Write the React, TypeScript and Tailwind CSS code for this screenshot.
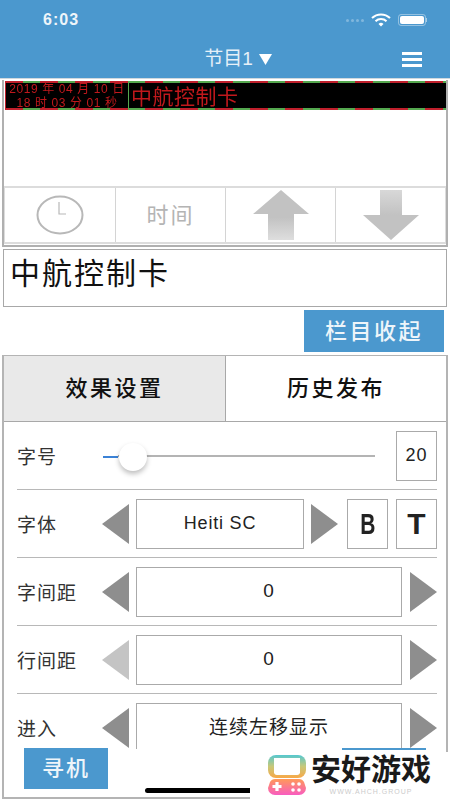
const FONT = "font-['Liberation_Sans','Noto_Sans_CJK_SC',sans-serif]";

function TriLeft({ light = false }: { light?: boolean }) {
  return (
    <svg width="27" height="40" viewBox="0 0 27 40" className="shrink-0">
      <polygon points="0,20 27,0 27,40" fill={light ? "#c4c4c4" : "#8e8e8e"} />
    </svg>
  );
}

function TriRight() {
  return (
    <svg width="27" height="40" viewBox="0 0 27 40" className="shrink-0">
      <polygon points="27,20 0,0 0,40" fill="#8e8e8e" />
    </svg>
  );
}

function ValueBox({ children, className }: { children: React.ReactNode; className: string }) {
  return (
    <div className={`flex h-[50px] items-center justify-center border-[1.5px] border-[#aaaaaa] text-[#222] ${className}`}>
      {children}
    </div>
  );
}

function Row({ label, children, last = false }: { label: string; children: React.ReactNode; last?: boolean }) {
  return (
    <div className={`flex h-[68px] items-center ${last ? "" : "border-b border-[#b8b8b8]"}`}>
      <div className="w-[85px] shrink-0 pt-[5px] text-[19px] tracking-[1px] text-[#333]">{label}</div>
      {children}
    </div>
  );
}

function StepRow({ label, value, light = false, last = false }: { label: string; value: string; light?: boolean; last?: boolean }) {
  return (
    <Row label={label} last={last}>
      <TriLeft light={light} />
      <ValueBox className="ml-[7px] w-[267px] text-[19px] tracking-[1px]">{value}</ValueBox>
      <div className="ml-[8px]">
        <TriRight />
      </div>
    </Row>
  );
}

export default function App() {
  return (
    <div className={`relative h-[800px] w-[450px] overflow-hidden bg-white ${FONT}`}>
      {/* header */}
      <header className="h-[79px] border-b border-[#cfd8de] bg-[#4b98ce] text-white">
        <div className="flex h-[40px] items-center justify-between pl-[43px] pr-[23px]">
          <span className="text-[16px] font-bold tracking-[1px] text-[#eef5fa]">6:03</span>
          <div className="flex items-center gap-[7px]">
            <div className="flex gap-[2px]">
              {[0, 1, 2, 3].map((i) => (
                <span key={i} className="h-[3px] w-[3px] rounded-full bg-white/30" />
              ))}
            </div>
            <svg width="20" height="14" viewBox="0 0 20 14">
              <path d="M1 5a13 13 0 0 1 18 0" fill="none" stroke="white" strokeWidth="2" />
              <path d="M4.5 8.3a8 8 0 0 1 11 0" fill="none" stroke="white" strokeWidth="2" />
              <path d="M7.5 11a3.5 3.5 0 0 1 5 0L10 13.6z" fill="white" />
            </svg>
            <div className="flex items-center">
              <div className="rounded-[3px] border border-white/40 p-[1px]">
                <div className="h-[8px] w-[24px] rounded-[2px] bg-white" />
              </div>
              <div className="h-[4px] w-[1px] bg-white/50" />
            </div>
          </div>
        </div>
        <div className="relative flex h-[38px] items-center justify-center pl-[26px]">
          <span className="text-[19px] text-[#e6f0f8]">节目1</span>
          <svg width="13" height="11" viewBox="0 0 13 11" className="ml-[6px]">
            <polygon points="0,0 13,0 6.5,11" fill="white" />
          </svg>
          <div className="absolute right-[28px] top-[12px] flex w-[20px] flex-col gap-[3px]">
            <span className="h-[3px] bg-white" />
            <span className="h-[3px] bg-white" />
            <span className="h-[3px] bg-white" />
          </div>
        </div>
      </header>

      {/* preview */}
      <section className="mx-[2px] mt-[1px] h-[167px] border-x-2 border-b-2 border-t-0 border-[#b0b0b0] bg-white pt-[1px]">
        <div className="ml-[1px] bg-[repeating-linear-gradient(90deg,#c0202c_0_18px,#55a84f_18px_35px)] py-[2px] pl-[1px]">
          <div className="flex h-[25px] bg-black text-[#c0181c]">
            <div className="flex w-[123px] shrink-0 flex-col items-center justify-center border-r border-[#55a84f] text-[12px] leading-[14px] tracking-[0.6px] blur-[0.3px]">
              <span>2019 年 04 月 10 日</span>
              <span>18 时 03 分 01 秒</span>
            </div>
            <div className="pl-[2px] text-[21px] leading-[27px] tracking-[0.5px] blur-[0.3px]">中航控制卡</div>
          </div>
        </div>
        <div className="mt-[76px] flex h-[58px] border-x border-y-2 border-[#dcdcdc] bg-white">
          <div className="flex w-[111px] items-center justify-center border-r border-[#d4d4d4]">
            <svg width="48" height="40" viewBox="0 0 48 40">
              <ellipse cx="24" cy="20" rx="22.5" ry="18.5" fill="none" stroke="#b8b8b8" strokeWidth="2" />
              <path d="M23 7v12h7" fill="none" stroke="#b8b8b8" strokeWidth="1.2" />
            </svg>
          </div>
          <div className="flex w-[110px] items-center justify-center border-r border-[#d4d4d4] text-[22px] tracking-[2px] text-[#b4b4b4]">
            时间
          </div>
          <div className="flex w-[110px] items-center justify-center border-r border-[#d4d4d4]">
            <svg width="56" height="50" viewBox="0 0 56 50">
              <defs>
                <linearGradient id="upFill" x1="0" y1="0" x2="0" y2="1">
                  <stop offset="0.55" stopColor="#c2c2c2" />
                  <stop offset="1" stopColor="#dedede" />
                </linearGradient>
              </defs>
              <polygon points="28,0 56,24 41,24 41,50 15,50 15,24 0,24" fill="url(#upFill)" />
            </svg>
          </div>
          <div className="flex flex-1 items-center justify-center">
            <svg width="56" height="50" viewBox="0 0 56 50">
              <defs>
                <linearGradient id="downFill" x1="0" y1="0" x2="0" y2="1">
                  <stop offset="0" stopColor="#d8d8d8" />
                  <stop offset="0.5" stopColor="#c2c2c2" />
                </linearGradient>
              </defs>
              <polygon points="28,50 56,25 39,25 39,0 17,0 17,25 0,25" fill="url(#downFill)" />
            </svg>
          </div>
        </div>
      </section>

      {/* text input */}
      <div className="mx-[3px] mt-[2px] h-[58px] border-[1.5px] border-[#a8a8a8] pl-[6px] text-[30px] leading-[48px] tracking-[2px] text-[#111]">
        中航控制卡
      </div>

      <div className="mt-[3px] flex justify-end pr-[6px]">
        <button className="h-[42px] w-[140px] bg-[#4b98ce] text-[22px] font-medium tracking-[2.5px] text-[#eef5fa]">栏目收起</button>
      </div>

      {/* settings panel */}
      <section className="mx-[2px] mt-[3px] h-[444px] border-2 border-t-[1px] border-[#b4b4b4]">
        <div className="flex h-[66px] border-b border-[#a8a8a8] text-[22px] font-medium tracking-[2.5px] text-[#111]">
          <div className="flex w-[222px] items-center justify-center border-r border-[#a8a8a8] bg-[#e9e9e9]">效果设置</div>
          <div className="flex flex-1 items-center justify-center">历史发布</div>
        </div>
        <div className="pl-[13px] pr-[9px]">
          <Row label="字号">
            <div className="ml-[16px] mr-[21px] h-[2px] flex-1 bg-[#b4b4b4]" />
            <ValueBox className="w-[41px] text-[18px] tracking-[1px]">20</ValueBox>
          </Row>
          <Row label="字体">
            <TriLeft />
            <ValueBox className="ml-[7px] w-[168px] text-[18px] tracking-[0.8px]">Heiti SC</ValueBox>
            <div className="ml-[7px]">
              <TriRight />
            </div>
            <ValueBox className="ml-[9px] w-[41px] text-[30px] font-bold">
              <span className="inline-block scale-x-[0.7]">B</span>
            </ValueBox>
            <ValueBox className="ml-[8px] w-[41px] text-[30px] font-bold">T</ValueBox>
          </Row>
          <StepRow label="字间距" value="0" />
          <StepRow label="行间距" value="0" light />
          <StepRow label="进入" value="连续左移显示" last />
        </div>
      </section>

      {/* slider fill and thumb sit on top of the track */}
      <div className="absolute left-[103px] top-[456px] h-[2px] w-[15px] bg-[#3b82d6]" />
      <div className="absolute left-[119px] top-[443px] h-[28px] w-[28px] rounded-full bg-white shadow-[0_3px_5px_rgba(0,0,0,0.25)]" />

      {/* bottom overlay */}
      <div className="absolute left-[4px] right-[6px] top-[749px] h-[47px] bg-white" />
      <button className="absolute left-[24px] top-[748px] h-[41px] w-[84px] bg-[#4b98ce] text-[22px] font-medium tracking-[2px] text-[#eef5fa]">寻机</button>
      <div className="absolute left-[342px] top-[748px] h-[2px] w-[84px] bg-[#4b98ce]" />
      <div className="absolute left-[145px] top-[788px] h-[5px] w-[160px] rounded-full bg-black" />

      {/* watermark */}
      <div className="absolute left-[250px] top-[752px] flex h-[48px] w-[200px] items-start bg-white pl-[17px]">
        <svg width="40" height="42" viewBox="0 0 40 42" className="mt-[2px] shrink-0">
          <defs>
            <linearGradient id="top" x1="0" y1="0" x2="0" y2="1">
              <stop offset="0" stopColor="#55c8d0" />
              <stop offset="0.5" stopColor="#c8c878" />
              <stop offset="1" stopColor="#f8a848" />
            </linearGradient>
            <linearGradient id="bot" x1="0" y1="0" x2="0" y2="1">
              <stop offset="0" stopColor="#ff9a58" />
              <stop offset="1" stopColor="#f85cc0" />
            </linearGradient>
          </defs>
          <rect x="1" y="1" width="38" height="23" rx="8" fill="url(#top)" />
          <path d="M7 4h26v15a3 3 0 0 1-3 2H10a3 3 0 0 1-3-2z" fill="white" />
          <path d="M3 28a6 6 0 0 1 6-3h22a6 6 0 0 1 6 3l2 6a7 7 0 0 1-7 7H8a7 7 0 0 1-7-7z" fill="url(#bot)" />
          <path d="M10 28v9M5.5 32.5h9" stroke="white" strokeWidth="3.2" />
          <circle cx="26" cy="30" r="1.8" fill="white" />
          <circle cx="32" cy="30" r="1.8" fill="white" />
          <circle cx="26" cy="36" r="1.8" fill="white" />
          <circle cx="32" cy="36" r="1.8" fill="white" />
        </svg>
        <div className="ml-[4px] flex flex-col items-center">
          <span className="text-[30px] font-bold leading-[36px] text-[#1a1a1a]">安好游戏</span>
          <span className="text-[7px] leading-[8px] tracking-[1px] text-[#ccc]">WWW.AHCH.GROUP</span>
        </div>
      </div>
    </div>
  );
}
